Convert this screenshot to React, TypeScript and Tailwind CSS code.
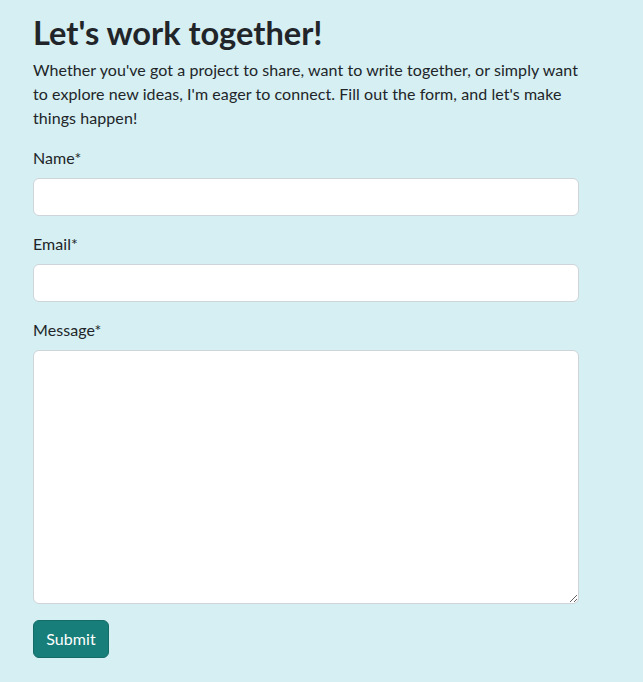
import React from "react";

function Field({ label, id }: { label: string; id: string }) {
  return (
    <div className="mb-4">
      <label htmlFor={id} className="block mb-2 leading-6">
        {label}
      </label>
      <input
        id={id}
        type="text"
        className="block w-full h-[38px] px-3 bg-white border border-[#ced4da] rounded-[6px] outline-none"
      />
    </div>
  );
}

export default function App() {
  return (
    <div className="min-h-[682px] bg-[#d5eff2] text-[#212529] font-['Lato','Open_Sans',sans-serif] text-[16px] tracking-[0.07px]">
      <div className="pl-[33px] pt-[14px] w-[579px]">
        <h1 className="text-[32.6px] leading-[38px] font-bold mb-[6px] tracking-normal">Let's work together!</h1>
        <p className="leading-6 mb-4">
          Whether you've got a project to share, want to write together, or simply want to explore new
          ideas, I'm eager to connect. Fill out the form, and let's make things happen!
        </p>
        <form onSubmit={(e) => e.preventDefault()}>
          <Field label="Name*" id="name" />
          <Field label="Email*" id="email" />
          <div className="mb-4">
            <label htmlFor="message" className="block mb-2 leading-6">
              Message*
            </label>
            <textarea
              id="message"
              className="block w-full h-[254px] px-3 py-1.5 bg-white border border-[#ced4da] rounded-[6px] outline-none"
            />
          </div>
          <button
            type="submit"
            className="h-[38px] w-[76px] px-3 bg-[#177e7a] border border-[#146c69] text-white rounded-[6px] leading-6"
          >
            Submit
          </button>
        </form>
      </div>
    </div>
  );
}
